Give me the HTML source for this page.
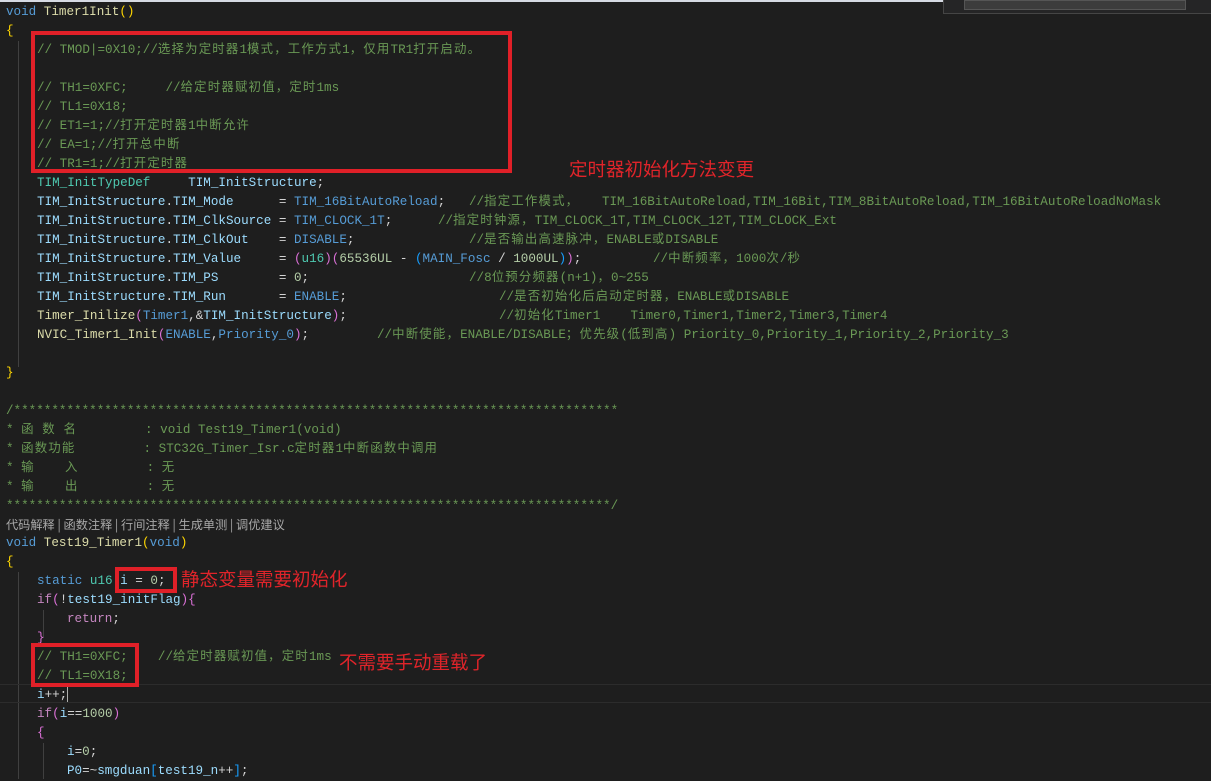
<!DOCTYPE html>
<html><head><meta charset="utf-8"><style>
html,body{margin:0;padding:0;}
body{width:1211px;height:779px;background:#1e1e1e;position:relative;overflow:hidden;
font-family:"Liberation Mono","Noto Sans CJK SC",monospace;font-size:12.6px;color:#d4d4d4;}
.l{position:absolute;white-space:pre;height:19px;line-height:19px;}
.c{color:#6a9955}.k{color:#569cd6}.t{color:#4ec9b0}.f{color:#dcdcaa}.v{color:#9cdcfe}.n{color:#b5cea8}
.p{color:#c586c0}.y{color:#ffd700}.m{color:#da70d6}.b{color:#179fff}.w{color:#d4d4d4}
.cj{font-family:"Noto Sans CJK SC",sans-serif;font-size:12.4px;letter-spacing:1.2px;line-height:0;}
.box{position:absolute;border:4px solid #e02028;box-sizing:border-box;}
.ann{position:absolute;color:#e0242a;font-family:"Noto Sans CJK SC",sans-serif;font-size:18.5px;line-height:22px;white-space:nowrap;}
.g{position:absolute;width:1px;background:#404040;}
</style></head><body>
<div style="position:absolute;left:0;top:0;width:1211px;height:2px;background:#d6dae3"></div>
<div style="position:absolute;left:943px;top:0;width:268px;height:13px;background:#252526;border-left:1px solid #454545;border-bottom:1px solid #454545"></div>
<div style="position:absolute;left:964px;top:0;width:220px;height:8px;background:#3c3c3c;border:1px solid #555"></div>

<div class="g" style="left:18px;top:41px;height:326px"></div>
<div class="g" style="left:18px;top:572px;height:207px"></div>
<div class="g" style="left:43px;top:610px;height:28px"></div>
<div class="g" style="left:43px;top:743px;height:36px"></div>
<div style="position:absolute;left:0;top:684px;width:1211px;height:17px;border-top:1px solid #2c2c2c;border-bottom:1px solid #2c2c2c"></div>

<div class="l" style="left:6px;top:3px"><span class="k">void</span> <span class="f">Timer1Init</span><span class="y">()</span></div>
<div class="l" style="left:6px;top:22px"><span class="y">{</span></div>
<div class="l c" style="left:37px;top:41px">// TMOD|=0X10;//选择为定时器1模式，工作方式1，仅用TR1打开启动。</div>
<div class="l c" style="left:37px;top:79px">// TH1=0XFC;     //给定时器赋初值，定时1ms</div>
<div class="l c" style="left:37px;top:98px">// TL1=0X18;</div>
<div class="l c" style="left:37px;top:117px">// ET1=1;//打开定时器1中断允许</div>
<div class="l c" style="left:37px;top:136px">// EA=1;//打开总中断</div>
<div class="l c" style="left:37px;top:155px">// TR1=1;//打开定时器</div>
<div class="l" style="left:37px;top:174px"><span class="t">TIM_InitTypeDef</span>     <span class="v">TIM_InitStructure</span>;</div>
<div class="l" style="left:37px;top:193px"><span class="v">TIM_InitStructure</span>.<span class="v">TIM_Mode</span>      = <span class="k">TIM_16BitAutoReload</span>;</div>
<div class="l c" style="left:469px;top:193px">//指定工作模式，   TIM_16BitAutoReload,TIM_16Bit,TIM_8BitAutoReload,TIM_16BitAutoReloadNoMask</div>
<div class="l" style="left:37px;top:212px"><span class="v">TIM_InitStructure</span>.<span class="v">TIM_ClkSource</span> = <span class="k">TIM_CLOCK_1T</span>;</div>
<div class="l c" style="left:438px;top:212px">//指定时钟源，TIM_CLOCK_1T,TIM_CLOCK_12T,TIM_CLOCK_Ext</div>
<div class="l" style="left:37px;top:231px"><span class="v">TIM_InitStructure</span>.<span class="v">TIM_ClkOut</span>    = <span class="k">DISABLE</span>;</div>
<div class="l c" style="left:469px;top:231px">//是否输出高速脉冲，ENABLE或DISABLE</div>
<div class="l" style="left:37px;top:250px"><span class="v">TIM_InitStructure</span>.<span class="v">TIM_Value</span>     = <span class="m">(</span><span class="t">u16</span><span class="m">)(</span><span class="n">65536UL</span> - <span class="b">(</span><span class="k">MAIN_Fosc</span> / <span class="n">1000UL</span><span class="b">)</span><span class="m">)</span>;</div>
<div class="l c" style="left:653px;top:250px">//中断频率，1000次/秒</div>
<div class="l" style="left:37px;top:269px"><span class="v">TIM_InitStructure</span>.<span class="v">TIM_PS</span>        = <span class="n">0</span>;</div>
<div class="l c" style="left:469px;top:269px">//8位预分频器(n+1)，0~255</div>
<div class="l" style="left:37px;top:288px"><span class="v">TIM_InitStructure</span>.<span class="v">TIM_Run</span>       = <span class="k">ENABLE</span>;</div>
<div class="l c" style="left:499px;top:288px">//是否初始化后启动定时器，ENABLE或DISABLE</div>
<div class="l" style="left:37px;top:307px"><span class="f">Timer_Inilize</span><span class="m">(</span><span class="k">Timer1</span>,&amp;<span class="v">TIM_InitStructure</span><span class="m">)</span>;</div>
<div class="l c" style="left:499px;top:307px">//初始化Timer1    Timer0,Timer1,Timer2,Timer3,Timer4</div>
<div class="l" style="left:37px;top:326px"><span class="f">NVIC_Timer1_Init</span><span class="m">(</span><span class="k">ENABLE</span>,<span class="k">Priority_0</span><span class="m">)</span>;</div>
<div class="l c" style="left:377px;top:326px">//中断使能，ENABLE/DISABLE；优先级(低到高) Priority_0,Priority_1,Priority_2,Priority_3</div>
<div class="l" style="left:6px;top:364px"><span class="y">}</span></div>

<div class="l c" style="left:6px;top:402px">/********************************************************************************</div>
<div class="l c" style="left:6px;top:421px">* 函 数 名         : void Test19_Timer1(void)</div>
<div class="l c" style="left:6px;top:440px">* 函数功能         : STC32G_Timer_Isr.c定时器1中断函数中调用</div>
<div class="l c" style="left:6px;top:459px">* 输    入         : 无</div>
<div class="l c" style="left:6px;top:478px">* 输    出         : 无</div>
<div class="l c" style="left:6px;top:497px">********************************************************************************/</div>
<div style="position:absolute;left:6px;top:515px;height:19px;line-height:19px;white-space:pre;color:#a8a8a8;font-family:'Noto Sans CJK SC',sans-serif;font-size:12.2px">代码解释 | 函数注释 | 行间注释 | 生成单测 | 调优建议</div>
<div class="l" style="left:6px;top:534px"><span class="k">void</span> <span class="f">Test19_Timer1</span><span class="y">(</span><span class="k">void</span><span class="y">)</span></div>
<div class="l" style="left:6px;top:553px"><span class="y">{</span></div>
<div class="l" style="left:37px;top:572px"><span class="k">static</span> <span class="t">u16</span> <span class="v">i</span> = <span class="n">0</span>;</div>
<div class="l" style="left:37px;top:591px"><span class="p">if</span><span class="m">(</span>!<span class="v">test19_initFlag</span><span class="m">){</span></div>
<div class="l" style="left:67px;top:610px"><span class="p">return</span>;</div>
<div class="l" style="left:37px;top:629px"><span class="m">}</span></div>
<div class="l c" style="left:37px;top:648px">// TH1=0XFC;    //给定时器赋初值，定时1ms</div>
<div class="l c" style="left:37px;top:667px">// TL1=0X18;</div>
<div class="l" style="left:37px;top:686px"><span class="v">i</span>++;<span style="display:inline-block;width:1px;height:15px;background:#aeafad;vertical-align:middle"></span></div>
<div class="l" style="left:37px;top:705px"><span class="p">if</span><span class="m">(</span><span class="v">i</span>==<span class="n">1000</span><span class="m">)</span></div>
<div class="l" style="left:37px;top:724px"><span class="m">{</span></div>
<div class="l" style="left:67px;top:743px"><span class="v">i</span>=<span class="n">0</span>;</div>
<div class="l" style="left:67px;top:762px"><span class="v">P0</span>=~<span class="v">smgduan</span><span class="b">[</span><span class="v">test19_n</span>++<span class="b">]</span>;</div>

<div class="box" style="left:31px;top:31px;width:481px;height:142px"></div>
<div class="box" style="left:115px;top:567px;width:62px;height:26px"></div>
<div class="box" style="left:31px;top:643px;width:108px;height:44px"></div>
<div class="ann" style="left:569px;top:158px">定时器初始化方法变更</div>
<div class="ann" style="left:181px;top:568px">静态变量需要初始化</div>
<div class="ann" style="left:339px;top:651px">不需要手动重载了</div>
<script>
(function(){
var re=/[\u3000-\u303f\u3400-\u9fff\uff00-\uffef]+/g;
document.querySelectorAll('.l').forEach(function(el){
  var w=document.createTreeWalker(el,NodeFilter.SHOW_TEXT,null,false),nodes=[],n;
  while(n=w.nextNode())nodes.push(n);
  nodes.forEach(function(t){
    var s=t.nodeValue;re.lastIndex=0;if(!re.test(s))return;re.lastIndex=0;
    var frag=document.createDocumentFragment(),last=0,m;
    while((m=re.exec(s))){
      if(m.index>last)frag.appendChild(document.createTextNode(s.slice(last,m.index)));
      var sp=document.createElement('span');sp.className='cj';sp.textContent=m[0];frag.appendChild(sp);
      last=m.index+m[0].length;
    }
    if(last<s.length)frag.appendChild(document.createTextNode(s.slice(last)));
    t.parentNode.replaceChild(frag,t);
  });
});
})();
</script>
</body></html>
